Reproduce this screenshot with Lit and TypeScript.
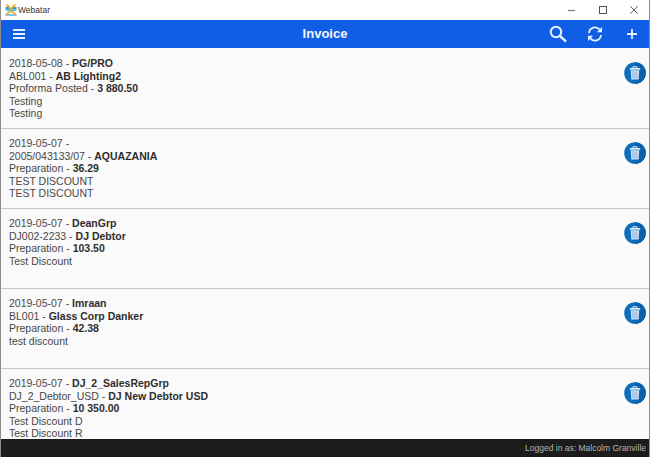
import { LitElement, html, css, svg } from "lit";
import { customElement } from "lit/decorators.js";

interface Row { l1: string; b1: string; l2: string; b2: string; l3: string; b3: string; notes: string[]; }

const rows: Row[] = [
  { l1: "2018-05-08 - ", b1: "PG/PRO", l2: "ABL001 - ", b2: "AB Lighting2", l3: "Proforma Posted - ", b3: "3 880.50", notes: ["Testing", "Testing"] },
  { l1: "2019-05-07 - ", b1: "", l2: "2005/043133/07 - ", b2: "AQUAZANIA", l3: "Preparation - ", b3: "36.29", notes: ["TEST DISCOUNT", "TEST DISCOUNT"] },
  { l1: "2019-05-07 - ", b1: "DeanGrp", l2: "DJ002-2233 - ", b2: "DJ Debtor", l3: "Preparation - ", b3: "103.50", notes: ["Test Discount"] },
  { l1: "2019-05-07 - ", b1: "Imraan", l2: "BL001 - ", b2: "Glass Corp Danker", l3: "Preparation - ", b3: "42.38", notes: ["test discount"] },
  { l1: "2019-05-07 - ", b1: "DJ_2_SalesRepGrp", l2: "DJ_2_Debtor_USD - ", b2: "DJ New Debtor USD", l3: "Preparation - ", b3: "10 350.00", notes: ["Test Discount D", "Test Discount R"] },
];

const trash = svg`<svg class="trash" viewBox="0 0 22 22" width="22" height="22" aria-hidden="true">
  <circle cx="11" cy="11" r="10.8" fill="#0b6fbd"/>
  <path d="M11 .2a10.800 10.800 0 0 1 0 21.600z" fill="#0763ad"/>
  <rect x="8.800" y="4.600" width="4.400" height="1.600" rx=".5" fill="none" stroke="#d9e9f5" stroke-width=".9"/>
  <rect x="5.800" y="6" width="10.400" height="1.700" fill="#e8f1f8"/>
  <path d="M6.800 8.200h8.400l-.5 9.200H7.300z" fill="#cfe2f1"/>
  <path d="M9 9.400v6.800M11 9.400v6.800M13 9.400v6.800" stroke="#6ea9d8" stroke-width=".8"/>
</svg>`;

@customElement("app-root")
export class AppRoot extends LitElement {
  static styles = css`
    :host { display: block; width: 650px; height: 457px; font-family: "Liberation Sans", Arial, sans-serif; }
    .win { width: 650px; height: 457px; display: flex; flex-direction: column; box-sizing: border-box; border: 1px solid #8d8d8d; border-top: none; border-bottom: none; overflow: hidden; background: #fafafa; }
    .title { flex: none; height: 20px; background: #fff; display: flex; align-items: center; }
    .logo { margin-left: 4px; flex: none; }
    .title-text { margin-left: 1px; font: 8.500px "Liberation Sans", sans-serif; color: #333; flex: 1; }
    .wbtn { width: 31px; display: flex; justify-content: center; align-items: center; height: 20px; }
    .bar { flex: none; height: 28px; background: #115ee6; display: grid; grid-template-columns: 1fr auto 1fr; align-items: center; color: #fff; }
    .bar h1 { margin: 0 0 2px; font-size: 13px; font-weight: 700; color: #f2f6fe; }
    .left { padding-left: 12px; display: flex; }
    .right { display: flex; justify-content: flex-end; align-items: center; }
    .act { display: flex; justify-content: center; align-items: center; }
    .act.s { width: 18px; margin-right: 20px; }
    .act.r { width: 16px; margin-right: 23px; }
    .act.p { width: 12px; margin-right: 11px; }
    .list { flex: 1; min-height: 0; overflow: hidden; padding-top: 1px; }
    .row { height: 80px; box-sizing: border-box; border-bottom: 1px solid #c6c6c6; padding: 8px 3px 0 8px; display: flex; justify-content: space-between; background: #fafafa; }
    .text { font-size: 10.500px; line-height: 12.500px; color: #484848; }
    .text div { height: 12.500px; white-space: nowrap; }
    .text b { color: #2e2e2e; font-weight: 700; }
    .trash { display: block; margin-top: 5px; }
    .foot { flex: none; height: 18px; background: #1c1c1c; color: #b4b4b4; font-size: 8.500px; display: flex; align-items: center; justify-content: flex-end; padding-right: 3px; }
  `;

  render() {
    return html`<div class="win">
      <div class="title">
        <svg class="logo" width="12" height="12" viewBox="0 0 12 12" aria-hidden="true">
          <path d="M.5.500h2.500L6 4 9 .5h2.500L7.500 5.500h-3z" fill="#f0a818"/>
          <path d="M.5 3h2.500L5 5.500H.5zM11.500 3H9L7 5.500h4.500z" fill="#2a9fd8"/>
          <path d="M.5 5.500h11v1.200H.5z" fill="#27a6dc"/>
          <path d="M4.500 6.700h3L11.500 10H9L6 7.800 3 10H.5z" fill="#f0a818"/>
          <path d="M.5 10.500h11v1H.5z" fill="#1d7cc4"/>
        </svg>
        <span class="title-text">Webatar</span>
        <div class="wbtn"><svg width="10" height="10" viewBox="0 0 10 10"><path d="M1 5.500h7" stroke="#777" stroke-width="1.200"/></svg></div>
        <div class="wbtn"><svg width="10" height="10" viewBox="0 0 10 10"><rect x="1.500" y="1.500" width="7" height="7" fill="none" stroke="#555" stroke-width="1"/></svg></div>
        <div class="wbtn"><svg width="10" height="10" viewBox="0 0 10 10"><path d="M1.500 1.500l7 7M8.500 1.500l-7 7" stroke="#555" stroke-width="1"/></svg></div>
      </div>
      <div class="bar">
        <div class="left"><svg width="12" height="10" viewBox="0 0 12 10"><path d="M0 1h12M0 5h12M0 9h12" stroke="#e9f0fd" stroke-width="1.800"/></svg></div>
        <h1>Invoice</h1>
        <div class="right">
          <div class="act s"><svg width="18" height="18" viewBox="0 0 18 18"><circle cx="7" cy="7" r="5.200" fill="none" stroke="#e9f0fd" stroke-width="2"/><path d="M11 11l6 5.600" stroke="#e9f0fd" stroke-width="2.400"/></svg></div>
          <div class="act r"><svg width="16" height="16" viewBox="0 0 16 16" fill="none"><path d="M2 7a6 6 0 0 1 10.600-3.400" stroke="#e9f0fd" stroke-width="1.800"/><path d="M14 9a6 6 0 0 1-10.600 3.400" stroke="#e9f0fd" stroke-width="1.800"/><path d="M15 1v5.200h-5.200zM1 15V9.800h5.200z" fill="#e9f0fd"/></svg></div>
          <div class="act p"><svg width="10" height="10" viewBox="0 0 10 10"><path d="M5 0v10M0 5h10" stroke="#e9f0fd" stroke-width="1.800"/></svg></div>
        </div>
      </div>
      <div class="list">
        ${rows.map((r) => html`<div class="row">
          <div class="text">
            <div>${r.l1}<b>${r.b1}</b></div>
            <div>${r.l2}<b>${r.b2}</b></div>
            <div>${r.l3}<b>${r.b3}</b></div>
            ${r.notes.map((n) => html`<div>${n}</div>`)}
          </div>
          ${trash}
        </div>`)}
      </div>
      <div class="foot">Logged in as: Malcolm Granville</div>
    </div>`;
  }
}
